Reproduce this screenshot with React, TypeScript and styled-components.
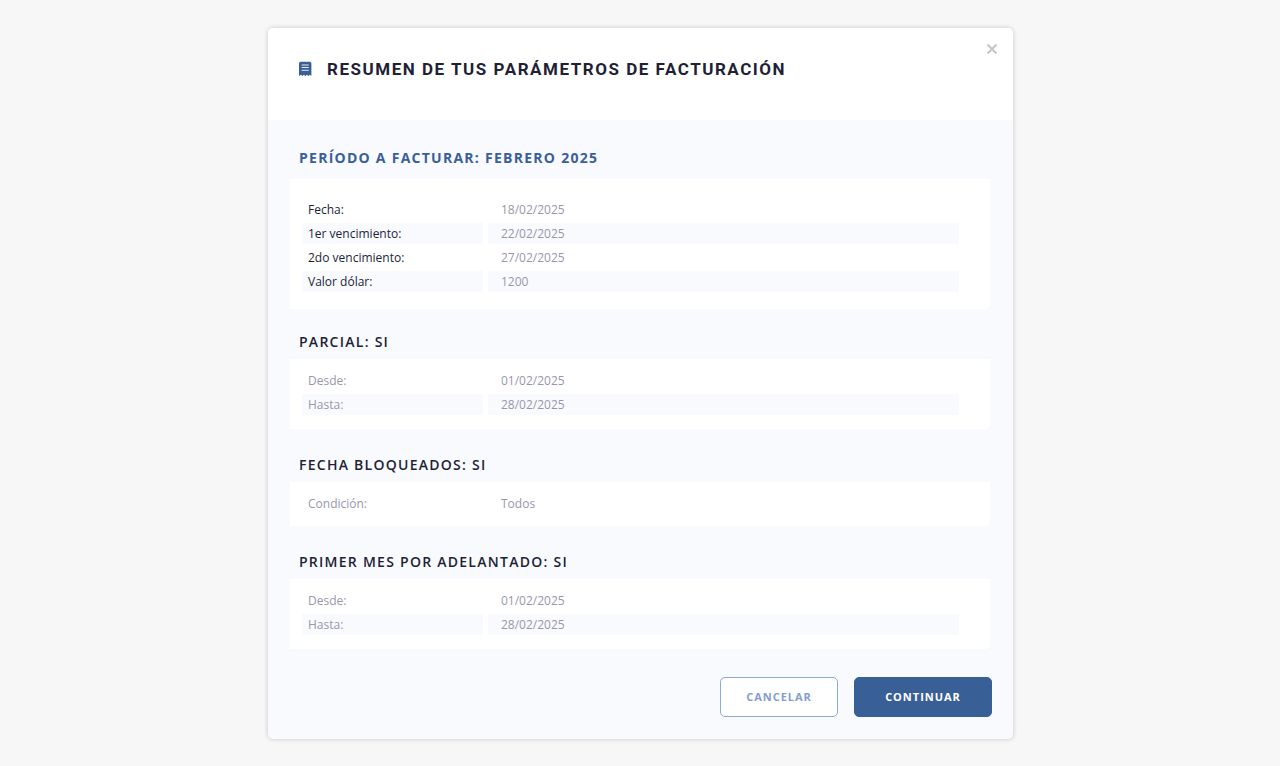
import React from 'react';
import styled, { createGlobalStyle } from 'styled-components';

const GlobalStyle = createGlobalStyle`
  *, *::before, *::after { box-sizing: border-box; }
  body {
    margin: 0;
    background: #f7f7f7;
    color: #211f36;
    font-family: 'Open Sans', 'Noto Sans', sans-serif;
  }
`;

const Page = styled.main`
  display: flex;
  justify-content: center;
  align-items: flex-start;
  padding: 28px 16px 27px 17px;
`;

const Modal = styled.section`
  position: relative;
  flex: 1;
  max-width: 745px;
  background: #f9fafe;
  border-radius: 5px;
  box-shadow: 0 0 5px rgba(0, 0, 0, 0.2);
`;

const Header = styled.header`
  display: flex;
  gap: 15px;
  padding: 29px 31px 39px;
  background: #fff;
  border-radius: 5px 5px 0 0;
`;

const HeaderIcon = styled.svg`
  flex: none;
  margin-top: 4px;
`;

const Title = styled.h1`
  margin: 0;
  font: 700 17px/24px Roboto, sans-serif;
  letter-spacing: 0.09em;
  text-transform: uppercase;
`;

const CloseButton = styled.button`
  position: absolute;
  top: 11px;
  right: 11px;
  display: grid;
  place-items: center;
  width: 20px;
  height: 20px;
  padding: 0;
  border: 0;
  background: none;
  cursor: pointer;
`;

const Body = styled.div`
  padding: 28px 21px 22px 22px;
`;

const Section = styled.section<{ $main?: boolean }>`
  margin: 0 2px ${({ $main }) => ($main ? 23 : 26)}px 0;

  &:last-of-type { margin-bottom: 28px; }
`;

const SectionTitle = styled.h2<{ $main?: boolean }>`
  margin: 0 0 ${({ $main }) => ($main ? 11 : 7)}px 9px;
  font-size: 14px;
  line-height: 20px;
  font-weight: ${({ $main }) => ($main ? 700 : 600)};
  letter-spacing: 0.09em;
  text-transform: uppercase;
  color: ${({ $main }) => ($main ? '#396096' : '#211f36')};
`;

const Card = styled.div<{ $main?: boolean; $single?: boolean }>`
  padding: ${({ $main }) => ($main ? '17px 26px 14px 7px' : '8px 26px 11px 7px')};
  ${({ $single }) => $single && 'padding-bottom: 9px;'}
  background: #fff;
  border-radius: 0 0 5px 0;
`;

const Table = styled.table<{ $main?: boolean }>`
  width: 100%;
  table-layout: fixed;
  border-collapse: separate;
  border-spacing: 5px 3px;
  font-size: 12px;
  line-height: 21px;
  color: #9896ac;

  th, td {
    height: 21px;
    padding: 0 13px;
    text-align: left;
    font-weight: 400;
  }
  th {
    width: 181px;
    padding: 0 6px;
    color: ${({ $main }) => ($main ? '#211f36' : 'inherit')};
  }
  tr:nth-child(even) > * { background: #f9fafe; }
`;

const Actions = styled.footer`
  display: flex;
  justify-content: flex-end;
  gap: 16px;
`;

const Button = styled.button<{ $primary?: boolean }>`
  width: ${({ $primary }) => ($primary ? 138 : 118)}px;
  height: 40px;
  padding: 0;
  border: 1px solid ${({ $primary }) => ($primary ? '#396096' : '#8ea9d2')};
  border-radius: 5px;
  background: ${({ $primary }) => ($primary ? '#396096' : '#fff')};
  color: ${({ $primary }) => ($primary ? '#fff' : '#829ecb')};
  font: 700 11px/16px 'Open Sans', sans-serif;
  letter-spacing: 0.09em;
  text-transform: uppercase;
  cursor: pointer;
`;

const ReceiptIcon = () => (
  <HeaderIcon width="13" height="15" viewBox="0 0 13 15" aria-hidden="true">
    <path
      d="M1.6 0.8h9.200a1.600 1.600 0 0 1 1.600 1.600V15l-1.500-1.200-1.500 1.200-1.500-1.200-1.500 1.200-1.500-1.200-1.500 1.200-1.500-1.200L0 15V2.400A1.600 1.600 0 0 1 1.600 0.800z"
      fill="#396096"
    />
    <path d="M2.700 4h7M2.700 6.500h7M2.700 9.300h7" stroke="#e4eaf3" strokeWidth="1" />
  </HeaderIcon>
);

interface Group {
  title: string;
  main?: boolean;
  rows: [string, string][];
}

const groups: Group[] = [
  {
    title: 'Período a facturar: Febrero 2025',
    main: true,
    rows: [
      ['Fecha:', '18/02/2025'],
      ['1er vencimiento:', '22/02/2025'],
      ['2do vencimiento:', '27/02/2025'],
      ['Valor dólar:', '1200'],
    ],
  },
  { title: 'Parcial: SI', rows: [['Desde:', '01/02/2025'], ['Hasta:', '28/02/2025']] },
  { title: 'Fecha bloqueados: SI', rows: [['Condición:', 'Todos']] },
  { title: 'Primer mes por adelantado: SI', rows: [['Desde:', '01/02/2025'], ['Hasta:', '28/02/2025']] },
];

export default function App() {
  return (
    <Page>
      <GlobalStyle />
      <Modal role="dialog" aria-labelledby="dialog-title">
        <Header>
          <ReceiptIcon />
          <Title id="dialog-title">Resumen de tus parámetros de facturación</Title>
          <CloseButton type="button" aria-label="Cerrar">
            <svg width="12" height="12" viewBox="0 0 12 12" aria-hidden="true">
              <path d="M1.500 1.500l9 9M10.500 1.500l-9 9" stroke="#c5c5ca" strokeWidth="2" />
            </svg>
          </CloseButton>
        </Header>
        <Body>
          {groups.map(({ title, main, rows }) => (
            <Section key={title} $main={main}>
              <SectionTitle $main={main}>{title}</SectionTitle>
              <Card $main={main} $single={rows.length === 1}>
                <Table $main={main} aria-label={title}>
                  <tbody>
                    {rows.map(([label, value]) => (
                      <tr key={label}>
                        <th scope="row">{label}</th>
                        <td>{value}</td>
                      </tr>
                    ))}
                  </tbody>
                </Table>
              </Card>
            </Section>
          ))}
          <Actions>
            <Button type="button">Cancelar</Button>
            <Button type="button" $primary>Continuar</Button>
          </Actions>
        </Body>
      </Modal>
    </Page>
  );
}
